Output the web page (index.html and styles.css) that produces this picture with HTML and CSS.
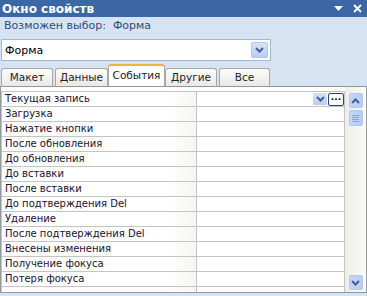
FILE: index.html
```html
<!DOCTYPE html>
<html lang="ru">
<head>
    <meta charset="UTF-8">
    <title>Окно свойств</title>
    <link rel="stylesheet" href="styles.css">
</head>
<body>
    <div class="window">
        <div class="titlebar">
            <span class="title">Окно свойств</span>
            <span class="title-menu">
                <svg width="9" height="5" viewBox="0 0 9 5"><path d="M0 0h9L4.5 5z" fill="#fff"/></svg>
            </span>
            <span class="title-close">
                <svg width="9" height="9" viewBox="0 0 9 9"><path d="M1 1l7 7M8 1L1 8" stroke="#fff" stroke-width="2"/></svg>
            </span>
        </div>
        <div class="selection">Возможен выбор:&nbsp; Форма</div>
        <div class="combo">
            <span class="combo-text">Форма</span>
            <span class="drop-btn">
                <svg width="9" height="6" viewBox="0 0 9 6"><path d="M1 1l3.5 3.5L8 1" stroke="#4a5f86" stroke-width="2" fill="none"/></svg>
            </span>
        </div>
        <div class="tabs">
            <div class="tab">Макет</div>
            <div class="tab">Данные</div>
            <div class="tab active">События</div>
            <div class="tab">Другие</div>
            <div class="tab">Все</div>
        </div>
        <div class="panel">
            <div class="grid" id="grid">
                <!-- rows are filled in below -->
            </div>
            <div class="scrollbar">
                <span class="scroll-btn">
                    <svg width="9" height="6" viewBox="0 0 9 6"><path d="M1 5l3.5-3.5L8 5" stroke="#4a5f86" stroke-width="2" fill="none"/></svg>
                </span>
                <span class="scroll-thumb">
                    <svg width="7" height="7" viewBox="0 0 7 7"><path d="M0 .5h7M0 2.5h7M0 4.5h7M0 6.5h7" stroke="#8aa4e0" stroke-width="1"/></svg>
                </span>
                <span class="scroll-space"></span>
                <span class="scroll-btn">
                    <svg width="9" height="6" viewBox="0 0 9 6"><path d="M1 1l3.5 3.5L8 1" stroke="#4a5f86" stroke-width="2" fill="none"/></svg>
                </span>
            </div>
        </div>
    </div>

    <script>
        // last entry is the row that is cut off by the panel edge
        const events = [
            'Текущая запись', 'Загрузка', 'Нажатие кнопки', 'После обновления',
            'До обновления', 'До вставки', 'После вставки', 'До подтверждения Del',
            'Удаление', 'После подтверждения Del', 'Внесены изменения',
            'Получение фокуса', 'Потеря фокуса', ''
        ];
        const grid = document.getElementById('grid');
        events.forEach((name, i) => {
            const row = document.createElement('div');
            row.className = 'row';
            let value = '';
            if (i === 0) {
                value = `
                    <span class="cell-drop"><svg width="9" height="6" viewBox="0 0 9 6"><path d="M1 1l3.5 3.5L8 1" stroke="#4a5f86" stroke-width="2" fill="none"/></svg></span>
                    <span class="cell-build">...</span>`;
            }
            row.innerHTML = `<div class="name">${name}</div><div class="value">${value}</div>`;
            grid.appendChild(row);
        });
    </script>
</body>
</html>
```

FILE: styles.css
```css
body {
    margin: 0;
    background-color: #d6e3f3;
    font-family: 'DejaVu Sans', sans-serif;
    font-size: 10px;
    color: #1c1c2c;
}
.window {
    width: 367px;
    height: 296px;
    overflow: hidden;
}
.titlebar {
    height: 17px;
    background-color: #3b68a4;
    display: flex;
    align-items: center;
    padding-left: 2px;
}
.title {
    flex-grow: 1;
    color: #fff;
    font-weight: bold;
    font-size: 12px;
}
.title-menu {
    display: flex;
    margin-right: 10px;
}
.title-close {
    display: flex;
    margin-right: 5px;
}
.selection {
    height: 18px;
    line-height: 18px;
    padding-left: 4px;
    font-size: 11px;
    color: #2d4d80;
}
.combo {
    margin: 4px 0 0 1px;
    width: 268px;
    height: 20px;
    background-color: #fff;
    border: 1px solid #a5b7d0;
    display: flex;
    align-items: center;
}
.combo-text {
    flex-grow: 1;
    padding-left: 3px;
    font-size: 11px;
    color: #000;
}
.drop-btn {
    width: 15px;
    height: 14px;
    margin-right: 2px;
    background: linear-gradient(#d6e2fb, #b9cdf6);
    border: 1px solid #b3c6ef;
    border-radius: 2px;
    display: flex;
    align-items: center;
    justify-content: center;
}
.tabs {
    display: flex;
    align-items: flex-end;
    height: 21px;
    margin-top: 4px;
    padding-left: 1px;
}
.tab {
    height: 17px;
    line-height: 17px;
    border: 1px solid #a7a7a7;
    border-bottom: none;
    border-radius: 3px 3px 0 0;
    background: linear-gradient(#fdfdfd, #e9e8e4);
    text-align: center;
    margin-right: 2px;
    font-size: 10.5px;
}
.tab:nth-child(1) { width: 50px; }
.tab:nth-child(2) { width: 51px; margin-right: 0; }
.tab:nth-child(4) { width: 50px; }
.tab:nth-child(5) { width: 49px; }
.tab.active {
    width: 55px;
    height: 20px;
    line-height: 19px;
    background: #fff;
    border-top: 2px solid #f3b33d;
    margin-right: 0;
}
.panel {
    display: flex;
    width: 365px;
    height: 205px;
    border: 1px solid #919b9c;
    background-color: #fff;
}
.grid {
    width: 344px;
    padding-top: 4px;
    overflow: hidden;
}
.row {
    display: flex;
    height: 14px;
    border-top: 1px solid #c4c4c4;
}
.name {
    width: 191px;
    padding-left: 3px;
    line-height: 14px;
    border-left: 1px solid #c4c4c4;
    border-right: 1px solid #c4c4c4;
    background: linear-gradient(90deg, #fff 85%, #f5f5f3);
    white-space: nowrap;
    color: #1a1030;
}
.value {
    flex-grow: 1;
    border-right: 1px solid #c4c4c4;
    display: flex;
    justify-content: flex-end;
    align-items: center;
}
.cell-drop {
    width: 14px;
    height: 12px;
    background: linear-gradient(#d6e2fb, #b9cdf6);
    border-radius: 1px;
    display: flex;
    align-items: center;
    justify-content: center;
    margin-right: 1px;
}
.cell-build {
    width: 14px;
    height: 11px;
    border: 1px solid #2b4566;
    border-radius: 2px;
    background-color: #fff;
    font-weight: bold;
    font-size: 9px;
    line-height: 6px;
    text-align: center;
    color: #000;
}
.scrollbar {
    flex-grow: 1;
    display: flex;
    flex-direction: column;
    align-items: center;
    padding: 6px 0 2px;
    background: linear-gradient(90deg, #eeede6, #fbfbf8);
}
.scroll-btn,
.scroll-thumb {
    width: 12px;
    height: 13px;
    border: 1px solid #b4c8f1;
    border-radius: 2px;
    background: linear-gradient(90deg, #c6d6fa, #b8cbf5);
    display: flex;
    align-items: center;
    justify-content: center;
}
.scroll-thumb {
    margin-top: 2px;
    height: 14px;
}
.scroll-space {
    flex-grow: 1;
}
```
